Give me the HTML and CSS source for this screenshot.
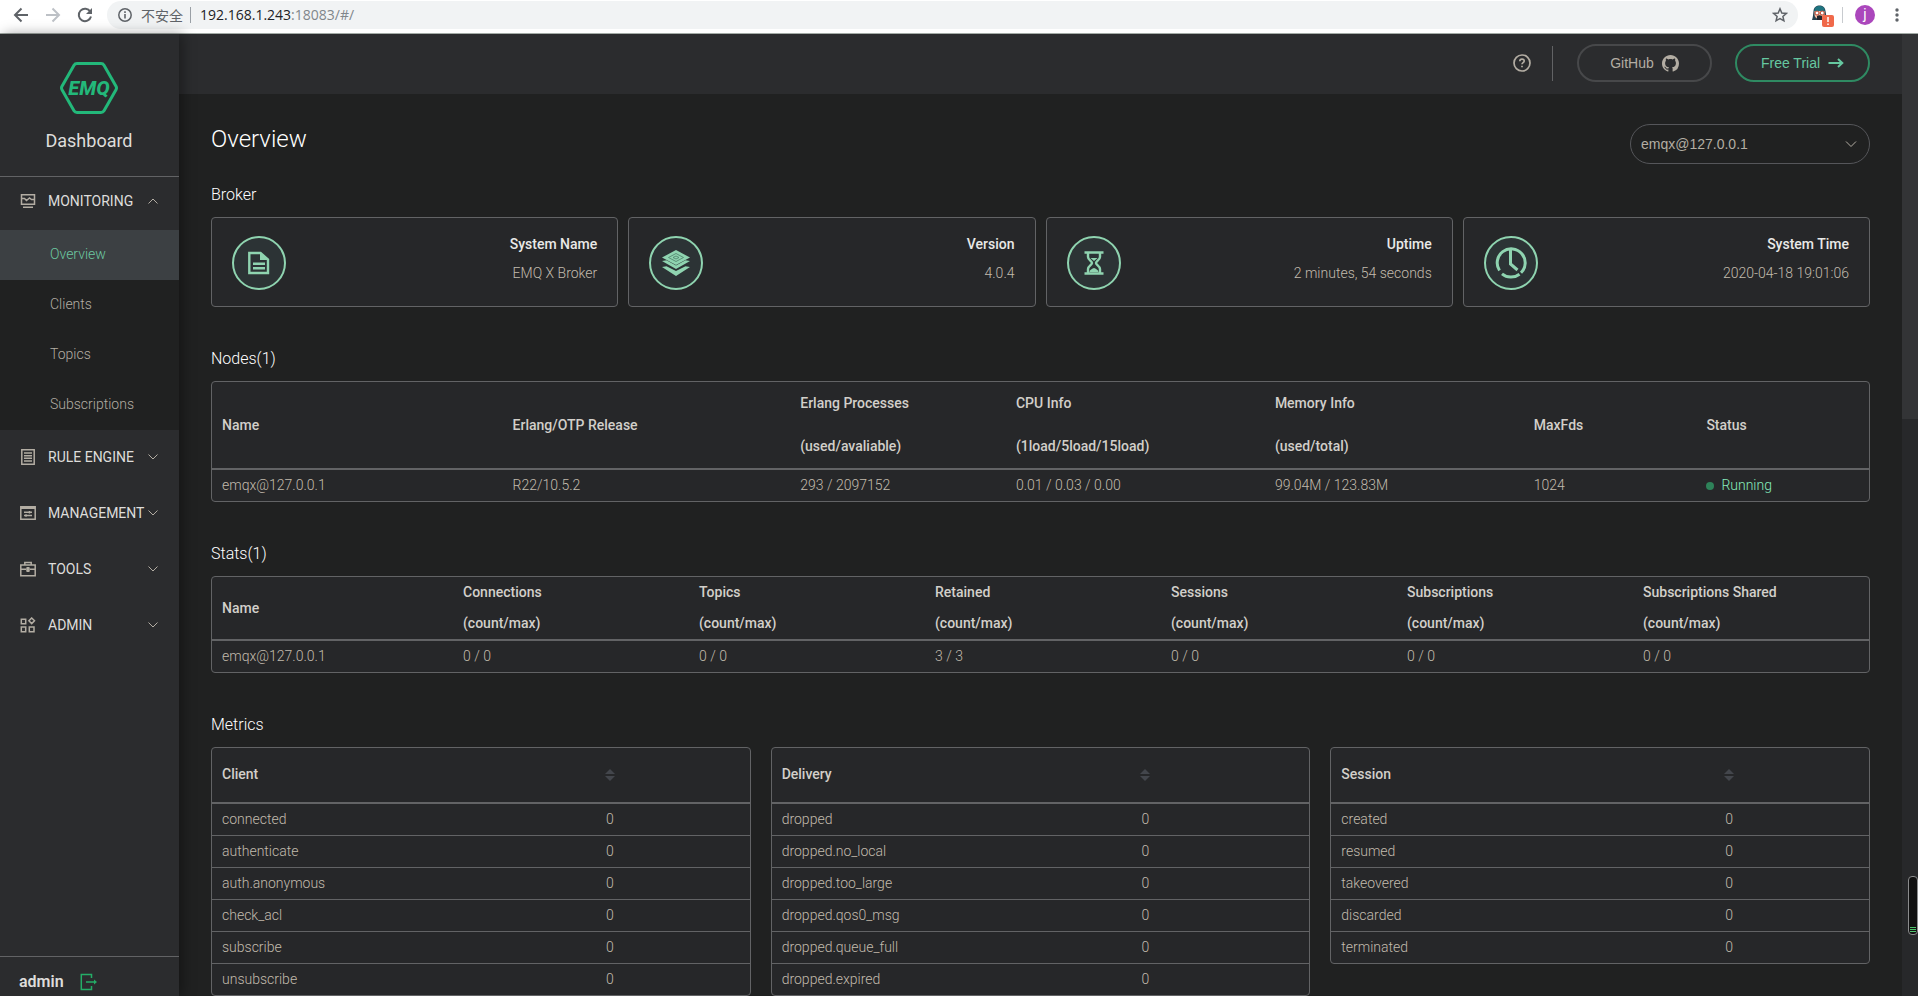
FILE: index.html
```html
<!DOCTYPE html>
<html lang="en">
<head>
    <meta charset="UTF-8">
    <meta name="viewport" content="width=device-width, initial-scale=1.0">
    <title>Dashboard</title>
    <link rel="stylesheet" href="styles.css">
</head>
<body>
    <div class="browser-bar">
        <button class="tool" aria-label="Back"><svg width="16" height="16" viewBox="0 0 16 16" fill="none" stroke="#5f6368" stroke-width="2"><path d="M15 8H2.500M8.500 1.500L2 8l6.500 6.500"/></svg></button>
        <button class="tool" aria-label="Forward"><svg width="16" height="16" viewBox="0 0 16 16" fill="none" stroke="#bdc1c6" stroke-width="2"><path d="M1 8h12.500M7.500 1.500L14 8l-6.500 6.500"/></svg></button>
        <button class="tool" aria-label="Reload"><svg width="16" height="16" viewBox="0 0 16 16"><path d="M13.300 4.700A6.200 6.200 0 1 0 14 9.500" fill="none" stroke="#5f6368" stroke-width="2"/><path d="M15 1v6H9z" fill="#5f6368"/></svg></button>
        <div class="address">
            <svg width="16" height="16" viewBox="0 0 16 16"><circle cx="8" cy="8" r="6.200" fill="none" stroke="#5f6368" stroke-width="1.500"/><path d="M7.200 7h1.600v4.500H7.200zM7.200 4.300h1.600v1.600H7.200z" fill="#5f6368"/></svg>
            <span class="unsafe">不安全</span>
            <span class="bar-line"></span>
            <span class="url">192.168.1.243<span class="url-rest">:18083/#/</span></span>
            <svg class="star" width="16" height="16" viewBox="0 0 16 16" fill="none" stroke="#5f6368" stroke-width="1.500"><path d="M8 1.800l1.800 4.200 4.500.4-3.400 3 1 4.400L8 11.500l-3.900 2.300 1-4.400-3.400-3 4.500-.4z"/></svg>
        </div>
        <div class="extensions">
            <svg width="24" height="24" viewBox="0 0 24 24">
                <path d="M2 17c1-3 1-5 1.500-9C4 4 6.500 2.500 9.500 2.500S15 4 15.500 8l1.500 9z" fill="#26414f"/>
                <path d="M5 4.800C7 2.500 12 2.500 14 4.800l.8 3.200H4.200z" fill="#1f7480"/>
                <path d="M4.500 8h10v4c0 2-2 4-5 4s-5-2-5-4z" fill="#f2b8a0"/>
                <path d="M7 13c1.500-1 3.500-1 5 0v4H7z" fill="#24262c"/>
                <circle cx="7" cy="10" r="2" fill="#fff" stroke="#b9452e"/><circle cx="12.200" cy="10" r="2" fill="#fff" stroke="#b9452e"/>
                <rect x="12" y="12" width="12" height="12" rx="2" fill="#f0694a"/>
                <path d="M18 14v5M18 20.500v1.500" stroke="#fff" stroke-width="1.500"/>
            </svg>
            <span class="bar-line"></span>
            <span class="avatar">j</span>
            <svg width="4" height="16" viewBox="0 0 4 16" fill="#5f6368"><circle cx="2" cy="3" r="1.700"/><circle cx="2" cy="8" r="1.700"/><circle cx="2" cy="13" r="1.700"/></svg>
        </div>
    </div>

    <div class="app">
        <div class="sidebar">
            <div class="brand">
                <svg class="logo" width="58" height="52" viewBox="0 0 58 52">
                    <path d="M17 1.500h24q2 0 3 1.700l12 21q1 1.800 0 3.600l-12 21q-1 1.700-3 1.700H17q-2 0-3-1.700l-12-21q-1-1.800 0-3.600l12-21q1-1.700 3-1.700z" fill="none" stroke="#23b87a" stroke-width="3"/>
                    <text x="29" y="33" text-anchor="middle" fill="#23b87a">EMQ</text>
                </svg>
                <div class="brand-name">Dashboard</div>
            </div>
            <nav class="menu">
                <button class="group">
                    <svg class="group-icon" width="16" height="16" viewBox="0 0 16 16" fill="none" stroke="currentColor" stroke-width="1.500"><path d="M1.500 1.700h13v9.600h-13zM1.500 5.500h3l2 2 3-2.500 2 1.500h3M3 14.200h10"/></svg>
                    <span>MONITORING</span>
                    <svg class="arrow" width="10" height="10" viewBox="0 0 10 10" fill="none" stroke="currentColor"><path d="M.5 7.500L5 3l4.500 4.500"/></svg>
                </button>
                <div class="submenu">
                    <a href="#/" class="active">Overview</a>
                    <a href="#/clients">Clients</a>
                    <a href="#/topics">Topics</a>
                    <a href="#/subscriptions">Subscriptions</a>
                </div>
                <button class="group">
                    <svg class="group-icon" width="16" height="16" viewBox="0 0 16 16" fill="none" stroke="currentColor" stroke-width="1.500"><path d="M1.800.8h12.400v14.400H1.800zM4 4h8M4 6.700h8M4 9.300h8M4 12h8"/></svg>
                    <span>RULE ENGINE</span>
                    <svg class="arrow" width="10" height="10" viewBox="0 0 10 10" fill="none" stroke="currentColor"><path d="M.5 2.500L5 7l4.500-4.500"/></svg>
                </button>
                <button class="group">
                    <svg class="group-icon" width="16" height="16" viewBox="0 0 16 16" fill="none" stroke="currentColor" stroke-width="1.500"><path d="M.8 1.800h14.400v12.400H.8zM.8 3.300h14.400M4 7.200h8M4 10.500h8M9.500 6v2.400M6 9.300v2.400"/></svg>
                    <span>MANAGEMENT</span>
                    <svg class="arrow" width="10" height="10" viewBox="0 0 10 10" fill="none" stroke="currentColor"><path d="M.5 2.500L5 7l4.500-4.500"/></svg>
                </button>
                <button class="group">
                    <svg class="group-icon" width="16" height="16" viewBox="0 0 16 16" fill="none" stroke="currentColor" stroke-width="1.500"><path d="M.8 4h14.400v10.700H.8zM4.800 4V1.500h6.400V4M.8 8.200H6M10 8.200h5.200"/><path d="M6.800 6.500h2.400v4H6.800z" fill="currentColor" stroke-width="1"/></svg>
                    <span>TOOLS</span>
                    <svg class="arrow" width="10" height="10" viewBox="0 0 10 10" fill="none" stroke="currentColor"><path d="M.5 2.500L5 7l4.500-4.500"/></svg>
                </button>
                <button class="group">
                    <svg class="group-icon" width="16" height="16" viewBox="0 0 16 16" fill="none" stroke="currentColor" stroke-width="1.500"><path d="M1.300 2.300h4.400v4.400H1.300zM1.300 10h4.400v4.700H1.300zM9.300 10h4.700v4.700H9.300zM11.700 1l2.800 2.800-2.800 2.800-2.800-2.800z"/></svg>
                    <span>ADMIN</span>
                    <svg class="arrow" width="10" height="10" viewBox="0 0 10 10" fill="none" stroke="currentColor"><path d="M.5 2.500L5 7l4.500-4.500"/></svg>
                </button>
            </nav>
            <div class="user">
                <span>admin</span>
                <button aria-label="Log out"><svg width="18" height="18" viewBox="0 0 18 18" fill="none" stroke="#24ad67" stroke-width="1.500"><path d="M11.500 5V1.500H1.300v15h10.200V13M6 9h9"/><path d="M14 6.500L17 9l-3 2.500z" fill="#24ad67" stroke="none"/></svg></button>
            </div>
        </div>

        <div class="main">
            <div class="topbar">
                <button class="help" aria-label="Help"><svg width="18" height="18" viewBox="0 0 18 18" fill="none" stroke="currentColor" stroke-width="1.700"><circle cx="9" cy="9" r="8"/><path d="M6.800 7.300C6.800 4.300 11.200 4.400 11.200 7c0 1.600-2.200 1.700-2.200 3.300M9 11.700v1.600"/></svg></button>
                <span class="divider"></span>
                <a class="pill" href="#github">GitHub <svg width="17" height="17" viewBox="0 0 16 16" fill="currentColor"><path d="M8 0C3.580 0 0 3.580 0 8c0 3.540 2.290 6.530 5.470 7.590.4.070.55-.17.55-.38 0-.19-.01-.82-.01-1.490-2.010.37-2.530-.49-2.690-.94-.09-.23-.48-.94-.82-1.130-.28-.15-.68-.52-.01-.53.63-.01 1.080.58 1.230.82.72 1.210 1.870.87 2.330.66.070-.52.28-.87.51-1.070-1.780-.2-3.640-.89-3.640-3.950 0-.87.31-1.590.82-2.150-.08-.2-.36-1.020.08-2.120 0 0 .67-.21 2.200.82.64-.18 1.320-.27 2-.27s1.360.09 2 .27c1.530-1.040 2.200-.82 2.200-.82.44 1.100.16 1.920.08 2.120.51.56.82 1.270.82 2.150 0 3.070-1.870 3.750-3.650 3.950.29.25.54.73.54 1.480 0 1.070-.01 1.930-.01 2.200 0 .21.15.46.55.38A8.010 8.010 0 0 0 16 8c0-4.420-3.580-8-8-8z"/></svg></a>
                <a class="pill trial" href="#trial">Free Trial <svg width="16" height="10" viewBox="0 0 16 10" fill="none" stroke="currentColor" stroke-width="2"><path d="M.5 5H14M10 1l4.300 4L10 9"/></svg></a>
            </div>

            <div class="content">
                <div class="page-head">
                    <h1>Overview</h1>
                    <div class="node-select">
                        <select aria-label="Node"><option>emqx@127.0.0.1</option></select>
                        <svg width="12" height="12" viewBox="0 0 12 12" fill="none" stroke="currentColor"><path d="M1 3.500l5 5 5-5"/></svg>
                    </div>
                </div>

                <section class="broker">
                    <h2>Broker</h2>
                    <div class="cards">
                        <div class="card">
                            <div class="circle"><svg width="24" height="24" viewBox="0 0 24 24"><path d="M2.300 2h11.200L21 8.500V22H2.300z" fill="none" stroke="currentColor" stroke-width="2.400"/><path d="M13 1l9 8h-9zM6 11.500h12V14H6zM6 16h12v2.500H6z" fill="currentColor"/></svg></div>
                            <div class="info"><strong>System Name</strong><span>EMQ X Broker</span></div>
                        </div>
                        <div class="card">
                            <div class="circle"><svg width="30" height="28" viewBox="0 0 30 28" fill="currentColor"><path d="M15 1l14 7.500L15 16 1 8.500z"/><path d="M1 12l4.500-.8L15 16.500l9.500-5.300 4.500.8-14 8zM1 18l4.500-.8L15 22l9.500-4.800L29 18l-14 9z"/><path d="M15 4.500l7.500 4L15 12.500l-7.500-4zM15 7l3 1.500-3 1.500-3-1.500z" fill="none" stroke="#4d8069" stroke-width=".8"/></svg></div>
                            <div class="info"><strong>Version</strong><span>4.0.4</span></div>
                        </div>
                        <div class="card">
                            <div class="circle"><svg width="20" height="26" viewBox="0 0 20 26" fill="none" stroke="currentColor" stroke-width="2.400"><path d="M.5 2.500h19M.5 23.500h19M4 2.500V7c0 3 4 4 4 6s-4 3-4 6v4.500M16 2.500V7c0 3-4 4-4 6s4 3 4 6v4.500"/><path d="M6.500 8h7L10 11zM5.500 22c0-2 3-3.500 4.500-4 1.500.5 4.500 2 4.500 4z" fill="currentColor" stroke="none"/></svg></div>
                            <div class="info"><strong>Uptime</strong><span>2 minutes, 54 seconds</span></div>
                        </div>
                        <div class="card">
                            <div class="circle"><svg width="32" height="32" viewBox="0 0 32 32" fill="none" stroke="currentColor" stroke-width="3"><path d="M4.500 23.500A14 14 0 1 1 26 25.800M24.500 27.200A14 14 0 0 1 7 26.800"/><path d="M15.500 3v14l7 6"/></svg></div>
                            <div class="info"><strong>System Time</strong><span>2020-04-18 19:01:06</span></div>
                        </div>
                    </div>
                </section>

                <section>
                    <h2>Nodes(1)</h2>
                    <div class="panel">
                        <table class="nodes">
                            <colgroup><col class="w-name"><col class="w-release"><col class="w-proc"><col class="w-info"><col class="w-info"><col class="w-small"><col class="w-small"></colgroup>
                            <thead>
                                <tr>
                                    <th>Name</th>
                                    <th>Erlang/OTP Release</th>
                                    <th>Erlang Processes<br>(used/avaliable)</th>
                                    <th>CPU Info<br>(1load/5load/15load)</th>
                                    <th>Memory Info<br>(used/total)</th>
                                    <th>MaxFds</th>
                                    <th>Status</th>
                                </tr>
                            </thead>
                            <tbody>
                                <tr>
                                    <td>emqx@127.0.0.1</td>
                                    <td>R22/10.5.2</td>
                                    <td>293 / 2097152</td>
                                    <td>0.01 / 0.03 / 0.00</td>
                                    <td>99.04M / 123.83M</td>
                                    <td>1024</td>
                                    <td><span class="running">Running</span></td>
                                </tr>
                            </tbody>
                        </table>
                    </div>
                </section>

                <section>
                    <h2>Stats(1)</h2>
                    <div class="panel">
                        <table class="stats">
                            <thead>
                                <tr>
                                    <th>Name</th>
                                    <th>Connections<br>(count/max)</th>
                                    <th>Topics<br>(count/max)</th>
                                    <th>Retained<br>(count/max)</th>
                                    <th>Sessions<br>(count/max)</th>
                                    <th>Subscriptions<br>(count/max)</th>
                                    <th>Subscriptions Shared<br>(count/max)</th>
                                </tr>
                            </thead>
                            <tbody>
                                <tr>
                                    <td>emqx@127.0.0.1</td>
                                    <td>0 / 0</td>
                                    <td>0 / 0</td>
                                    <td>3 / 3</td>
                                    <td>0 / 0</td>
                                    <td>0 / 0</td>
                                    <td>0 / 0</td>
                                </tr>
                            </tbody>
                        </table>
                    </div>
                </section>

                <section>
                    <h2>Metrics</h2>
                    <div class="metrics">
                        <div class="panel">
                            <table class="metric">
                                <thead><tr><th>Client</th><th><button class="sort" aria-label="Sort"></button></th></tr></thead>
                                <tbody>
                                    <tr><td>connected</td><td>0</td></tr>
                                    <tr><td>authenticate</td><td>0</td></tr>
                                    <tr><td>auth.anonymous</td><td>0</td></tr>
                                    <tr><td>check_acl</td><td>0</td></tr>
                                    <tr><td>subscribe</td><td>0</td></tr>
                                    <tr><td>unsubscribe</td><td>0</td></tr>
                                </tbody>
                            </table>
                        </div>
                        <div class="panel">
                            <table class="metric wide">
                                <thead><tr><th>Delivery</th><th><button class="sort" aria-label="Sort"></button></th></tr></thead>
                                <tbody>
                                    <tr><td>dropped</td><td>0</td></tr>
                                    <tr><td>dropped.no_local</td><td>0</td></tr>
                                    <tr><td>dropped.too_large</td><td>0</td></tr>
                                    <tr><td>dropped.qos0_msg</td><td>0</td></tr>
                                    <tr><td>dropped.queue_full</td><td>0</td></tr>
                                    <tr><td>dropped.expired</td><td>0</td></tr>
                                </tbody>
                            </table>
                        </div>
                        <div class="panel">
                            <table class="metric">
                                <thead><tr><th>Session</th><th><button class="sort" aria-label="Sort"></button></th></tr></thead>
                                <tbody>
                                    <tr><td>created</td><td>0</td></tr>
                                    <tr><td>resumed</td><td>0</td></tr>
                                    <tr><td>takeovered</td><td>0</td></tr>
                                    <tr><td>discarded</td><td>0</td></tr>
                                    <tr><td>terminated</td><td>0</td></tr>
                                </tbody>
                            </table>
                        </div>
                    </div>
                </section>
            </div>
        </div>

        <div class="scrollbar"><div class="thumb"></div></div>
    </div>

    <div class="meter"><i></i><i></i><i></i></div>
</body>
</html>
```
FILE: styles.css
```css
* {
    box-sizing: border-box;
}
body {
    margin: 0;
    height: 100vh;
    display: flex;
    flex-direction: column;
    overflow: hidden;
    background: #202121;
    color: #b3ada3;
    font-family: Roboto, "Noto Sans CJK SC", sans-serif;
    font-size: 14px;
}
button {
    padding: 0;
    border: none;
    background: none;
    color: inherit;
    font: inherit;
    cursor: pointer;
}
a {
    color: inherit;
    text-decoration: none;
}
svg {
    display: block;
    flex: none;
}

/* browser bar */
.browser-bar {
    flex: none;
    height: 34px;
    display: flex;
    align-items: flex-start;
    background: #fff;
    border-bottom: 1px solid #a3aba6;
    padding: 1px 19px 0 13px;
}
.tool {
    height: 28px;
    margin-right: 16px;
}
.address {
    flex: 1;
    height: 28px;
    display: flex;
    align-items: center;
    background: #f1f3f4;
    border-radius: 14px;
    padding: 0 10px;
    margin-left: -2px;
}
.unsafe {
    margin-left: 8px;
    color: #5f6368;
}
.bar-line {
    width: 1px;
    height: 16px;
    background: #9aa0a6;
    margin: 0 9px 0 7px;
}
.url {
    color: #202124;
    font-family: "Open Sans", sans-serif;
    font-size: 14px;
    line-height: 28px;
}
.url-rest {
    color: #80868b;
}
.star {
    margin-left: auto;
}
.extensions {
    height: 28px;
    display: flex;
    align-items: center;
    padding-left: 12px;
}
.extensions .bar-line {
    margin: 0 12px 0 8px;
    background: #c8cbcf;
}
.avatar {
    width: 20px;
    height: 20px;
    margin-right: 20px;
    border-radius: 50%;
    background: #ab47bc;
    color: #fff;
    line-height: 19px;
    text-align: center;
}

/* layout */
.app {
    flex: 1;
    min-height: 0;
    display: flex;
}
.sidebar {
    position: relative;
    z-index: 1;
    flex: none;
    width: 179px;
    display: flex;
    flex-direction: column;
    background: #2b2c2e;
    box-shadow: 4px 0 12px rgba(0, 0, 0, 0.35);
}
.main {
    flex: 1;
    min-width: 0;
    overflow: hidden;
}

/* sidebar */
.brand {
    height: 143px;
    display: flex;
    flex-direction: column;
    align-items: center;
    padding: 28px 1px 0 0;
    border-bottom: 1px solid #626365;
}
.logo text {
    font-size: 20px;
    font-weight: 800;
    font-style: italic;
}
.brand-name {
    margin-top: 15px;
    line-height: 24px;
    font-size: 18px;
    color: #dedddb;
}
.menu {
    flex: 1;
    margin-top: -3px;
}
.group {
    width: 100%;
    height: 56px;
    display: flex;
    align-items: center;
    padding: 0 21px 2px 20px;
}
.group span {
    margin-left: 12px;
    color: #dedddb;
}
.group .arrow {
    margin-left: auto;
}
.submenu {
    background: #202121;
    font-weight: 300;
}
.submenu a {
    display: block;
    height: 50px;
    padding-left: 50px;
    line-height: 49px;
}
.submenu .active {
    background: #3c4043;
    color: #6cc8a1;
}
.user {
    height: 40px;
    display: flex;
    align-items: center;
    gap: 16px;
    padding: 10px 19px 0;
    border-top: 1px solid #626365;
    color: #dedddb;
    font-size: 16px;
    font-weight: 600;
}

/* top bar */
.topbar {
    height: 60px;
    display: flex;
    align-items: center;
    justify-content: flex-end;
    padding: 0 32px 2px 0;
    background: #2b2c2e;
}
.divider {
    width: 1px;
    height: 35px;
    margin: 0 24px 0 21px;
    background: #626365;
}
.pill {
    width: 135px;
    height: 38px;
    display: flex;
    align-items: center;
    justify-content: center;
    gap: 8px;
    border: 2px solid #47484a;
    border-radius: 19px;
    font-family: "Liberation Sans", Arial, sans-serif;
}
.trial {
    margin-left: 23px;
    border-color: #2f8a62;
    color: #66c8a0;
}

/* content */
.content {
    padding: 30px 32px 0;
}
.page-head {
    display: flex;
    justify-content: space-between;
}
h1 {
    margin: 0;
    line-height: 30px;
    font-size: 24px;
    font-weight: 300;
    color: #fff;
}
.node-select {
    position: relative;
    width: 240px;
}
.node-select select {
    width: 100%;
    height: 40px;
    appearance: none;
    padding: 0 30px 0 10px;
    border: 1px solid #55565a;
    border-radius: 20px;
    background: none;
    color: inherit;
    font-family: "Liberation Sans", Arial, sans-serif;
    font-size: 14px;
}
.node-select svg {
    position: absolute;
    right: 13px;
    top: 14px;
    pointer-events: none;
}
section {
    margin-top: 42px;
}
.broker {
    margin-top: 21px;
}
h2 {
    margin: 0 0 12px;
    line-height: 20px;
    font-size: 16px;
    font-weight: 300;
    color: #fff;
}
.cards {
    display: grid;
    grid-template-columns: repeat(4, 1fr);
    gap: 10px;
}
.card,
.panel {
    background: #262729;
    border: 1px solid #626365;
    border-radius: 4px;
}
.card {
    height: 90px;
    display: flex;
    align-items: center;
    justify-content: space-between;
    padding: 2px 20px 0;
}
.circle {
    width: 54px;
    height: 54px;
    display: flex;
    align-items: center;
    justify-content: center;
    border: 2px solid #8fd4b0;
    border-radius: 50%;
    background: #2c3335;
    color: #8fd4b0;
}
.info {
    display: flex;
    flex-direction: column;
    text-align: right;
    line-height: 29px;
    padding-bottom: 8px;
}
.info strong {
    color: #e9e9e7;
    font-weight: 500;
}
.info span,
td {
    font-weight: 300;
    color: #c2bbad;
}

/* tables */
table {
    width: 100%;
    table-layout: fixed;
    border-spacing: 0;
}
th,
td {
    padding: 0 10px;
    text-align: left;
}
th {
    border-bottom: 2px solid #626365;
    color: #d2cfca;
    font-weight: 500;
}
td {
    height: 31px;
    line-height: 31px;
    vertical-align: top;
}
.w-name {
    width: 202px;
}
.w-release {
    width: 200px;
}
.w-proc {
    width: 150px;
}
.w-info {
    width: 180px;
}
.w-small {
    width: 120px;
}
.nodes th {
    line-height: 43px;
}
.stats th {
    line-height: 31px;
}
.stats th:first-child {
    width: 241px;
}
.running {
    display: flex;
    align-items: center;
    gap: 7px;
    color: #86ecbc;
}
.running::before {
    content: "";
    width: 8px;
    height: 8px;
    border-radius: 50%;
    background: #2e8259;
}
.metrics {
    display: grid;
    grid-template-columns: repeat(3, 1fr);
    align-items: start;
    gap: 20px;
}
.metric th {
    height: 56px;
    padding-bottom: 2px;
}
.metric th + th,
.metric td + td {
    width: 52%;
    text-align: center;
}
.wide th + th,
.wide td + td {
    width: 61%;
}
.metric tr + tr td {
    height: 32px;
    border-top: 1px solid #626365;
}
.sort {
    display: inline-flex;
    flex-direction: column;
    gap: 2px;
    vertical-align: middle;
}
.sort::before,
.sort::after {
    content: "";
    border: 5px solid transparent;
}
.sort::before {
    border-top: none;
    border-bottom-color: #43464c;
}
.sort::after {
    border-bottom: none;
    border-top-color: #43464c;
}

/* scrollbar and side meter */
.scrollbar {
    flex: none;
    width: 16px;
    background: #27282a;
}
.thumb {
    height: 40%;
    background: #333436;
}
.meter {
    position: fixed;
    right: 0;
    bottom: 61px;
    z-index: 2;
    width: 10px;
    height: 59px;
    display: flex;
    flex-direction: column;
    justify-content: flex-end;
    align-items: center;
    gap: 1px;
    padding-bottom: 2px;
    border: 1px solid #8b8c8d;
    border-radius: 4px;
    background: #111;
}
.meter i {
    width: 6px;
    height: 1px;
    background: #4fc36b;
}
```
